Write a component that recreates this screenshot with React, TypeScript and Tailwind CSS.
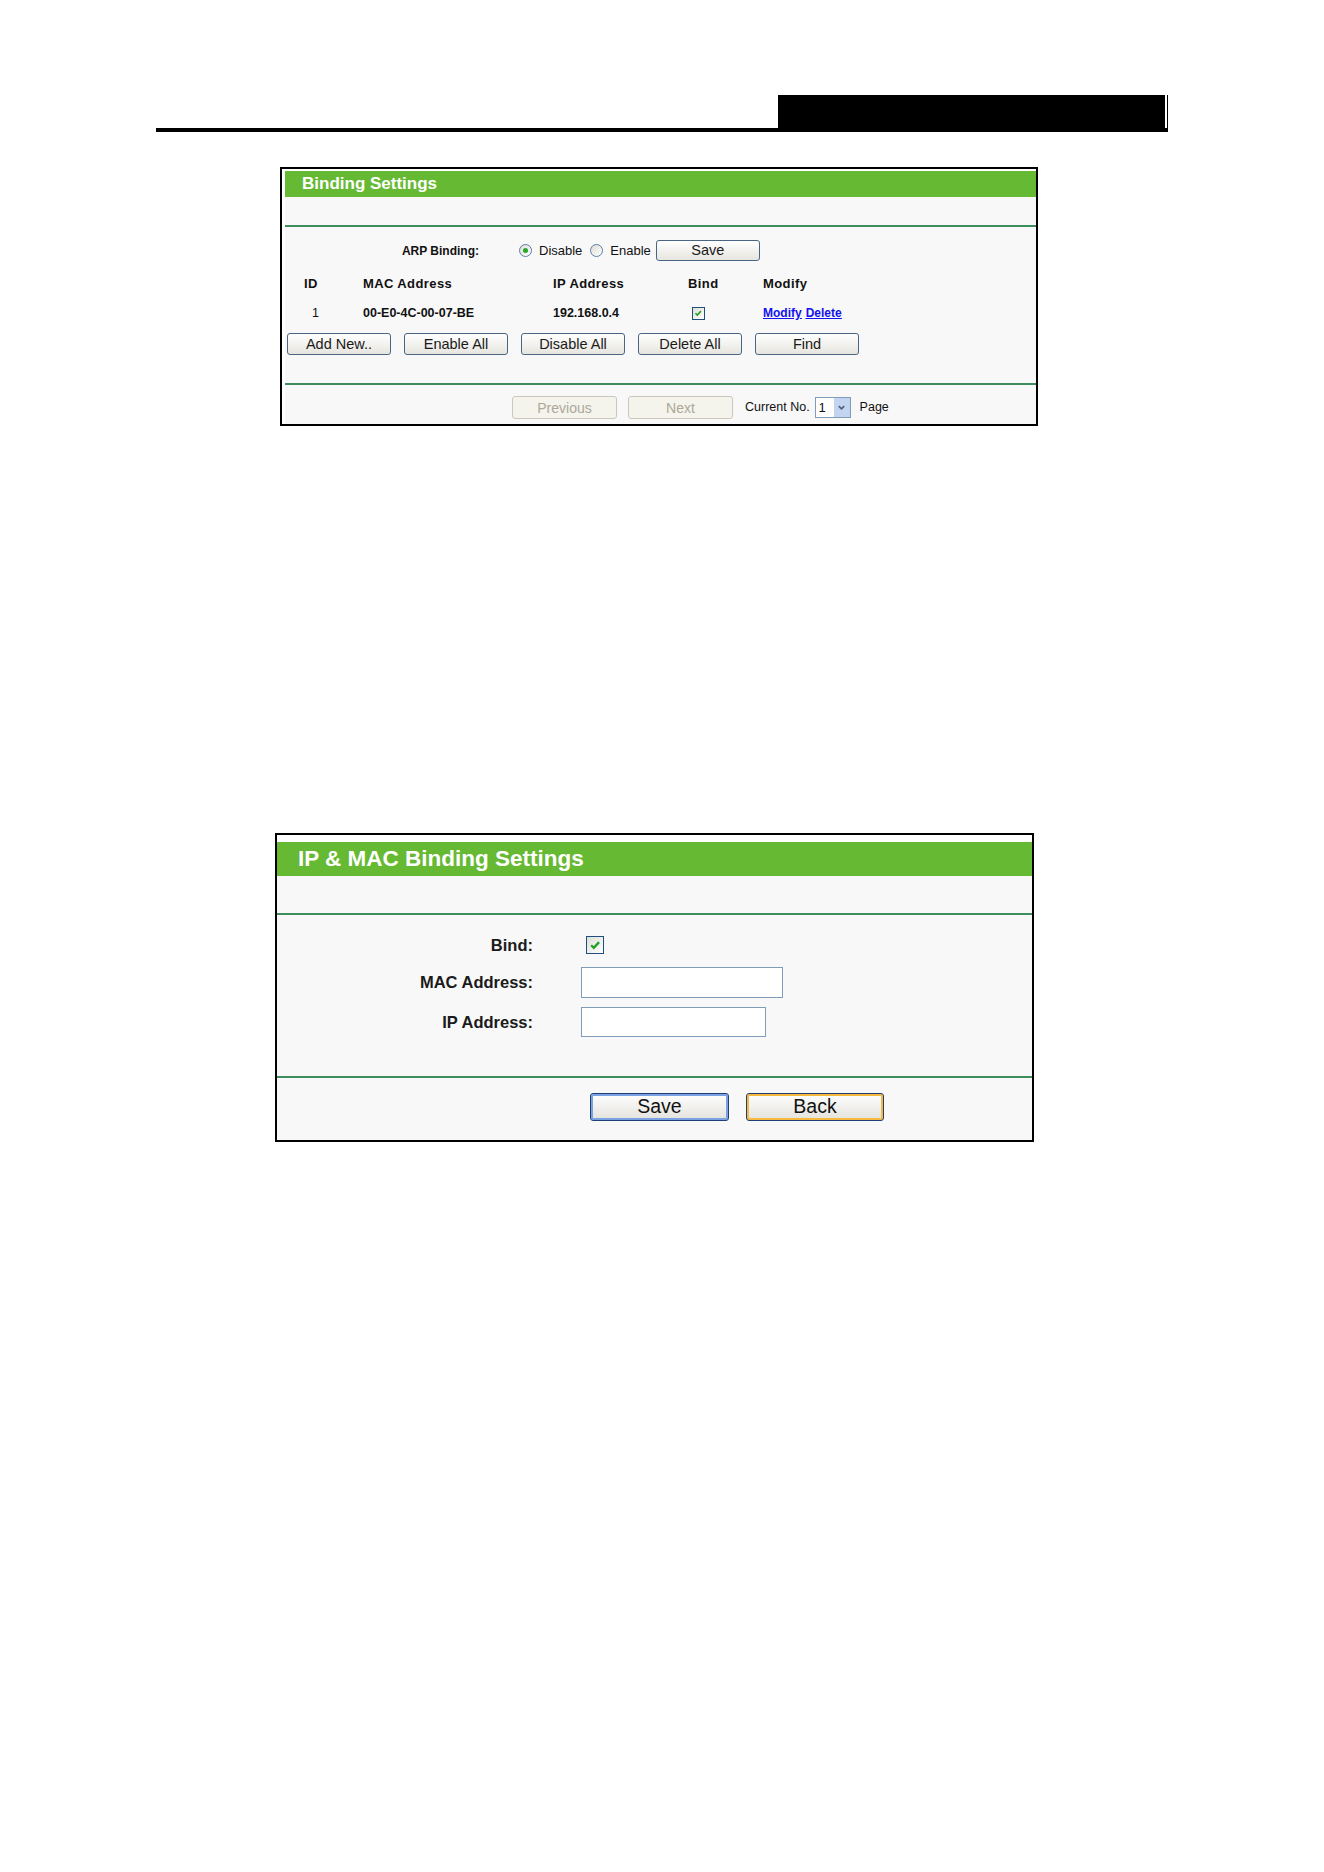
import React from "react";

const legacyBtn =
  "flex items-center justify-center rounded-[3px] border border-[#4b6684] bg-linear-to-b from-white to-[#e6e5de] text-[14.5px] leading-none text-[#1a1a1a]";

const disabledBtn =
  "flex items-center justify-center rounded-[3px] border border-[#cbc8bb] bg-[#f4f3ec] text-[14px] leading-none text-[#aca899]";

function Tick({ className }: { className: string }) {
  return (
    <span
      className={`flex shrink-0 items-center justify-center border border-[#1f4f7d] bg-linear-to-br from-[#dedfd8] to-white ${className}`}
    >
      <svg viewBox="0 0 10 10" className="h-[75%] w-[75%]">
        <path d="M1.8 5.2 L4 7.4 L8.4 2.6" fill="none" stroke="#21a121" strokeWidth="1.9" />
      </svg>
    </span>
  );
}

function Radio({ checked }: { checked?: boolean }) {
  return (
    <span className="flex h-[13px] w-[13px] shrink-0 items-center justify-center rounded-full border border-[#5c7fa4] bg-linear-to-br from-[#dcddd6] to-white">
      {checked && <span className="h-[5px] w-[5px] rounded-full bg-[#26a826]" />}
    </span>
  );
}

function GreenRule() {
  return <div className="h-[2px] bg-[#3d8d5d]" />;
}

function BindingList() {
  return (
    <div className="ml-[280px] mt-[35px] w-[758px] border-2 border-black bg-white">
      <div className="ml-[3px] mt-[2px] bg-[#f8f8f8]">
        <div className="flex h-[26px] items-center bg-[#66b933] pl-[17px] text-[17px] font-bold text-white">
          Binding Settings
        </div>
        <div className="h-[28px]" />
        <GreenRule />

        <div className="flex h-[156px] flex-col text-[#111]">
          {/* ARP switch */}
          <div className="mt-[13px] flex h-[21px] items-center">
            <div className="w-[194px] text-right text-[12px] font-bold">ARP Binding:</div>
            <span className="ml-[40px]">
              <Radio checked />
            </span>
            <span className="ml-[7px] text-[13px]">Disable</span>
            <span className="ml-[8px]">
              <Radio />
            </span>
            <span className="ml-[7px] text-[13px]">Enable</span>
            <button className={`${legacyBtn} ml-[5px] h-[21px] w-[104px]`}>Save</button>
          </div>

          {/* table head */}
          <div className="mt-[13px] flex h-[20px] items-center text-[13px] font-bold tracking-[0.4px]">
            <div className="w-[78px] pl-[19px]">ID</div>
            <div className="w-[190px]">MAC Address</div>
            <div className="w-[135px]">IP Address</div>
            <div className="w-[75px]">Bind</div>
            <div>Modify</div>
          </div>

          {/* entries */}
          <div className="mt-[9px] flex h-[20px] items-center text-[12.5px] font-bold">
            <div className="w-[78px] pl-[27px] font-normal">1</div>
            <div className="w-[190px]">00-E0-4C-00-07-BE</div>
            <div className="w-[135px]">192.168.0.4</div>
            <div className="w-[75px] pl-[4px]">
              <Tick className="h-[13px] w-[13px]" />
            </div>
            <div className="flex gap-[4px] text-[12px] text-[#1212ee] underline">
              <a>Modify</a>
              <a>Delete</a>
            </div>
          </div>

          <div className="ml-[2px] mt-[10px] flex gap-[13px]">
            {["Add New..", "Enable All", "Disable All", "Delete All", "Find"].map((label) => (
              <button key={label} className={`${legacyBtn} h-[22px] w-[104px]`}>
                {label}
              </button>
            ))}
          </div>
        </div>

        <GreenRule />
        <div className="h-[39px] pt-[11px]">
          <div className="flex h-[23px] items-center pl-[227px] text-[12.5px] text-[#111]">
            <button className={`${disabledBtn} h-[23px] w-[105px]`}>Previous</button>
            <button className={`${disabledBtn} ml-[11px] h-[23px] w-[105px]`}>Next</button>
            <span className="ml-[12px]">Current No.</span>
            <div className="ml-[5px] flex h-[21px] w-[36px] border border-[#7f9db9] bg-white">
              <span className="flex-1 pl-[3px] text-[13px] leading-[19px]">1</span>
              <span className="flex w-[16px] items-center justify-center bg-[#c3d4f1]">
                <svg viewBox="0 0 10 10" className="h-[9px] w-[9px]">
                  <path d="M2 3.5 L5 6.5 L8 3.5" fill="none" stroke="#4d6185" strokeWidth="2" />
                </svg>
              </span>
            </div>
            <span className="ml-[9px]">Page</span>
          </div>
        </div>
      </div>
    </div>
  );
}

function BindingEditor() {
  return (
    <div className="ml-[275px] mt-[407px] w-[759px] border-2 border-black bg-white">
      <div className="mt-[7px] bg-[#f8f8f8]">
        <div className="flex h-[34px] items-center bg-[#66b933] pl-[21px] text-[22.5px] font-bold text-white">
          IP &amp; MAC Binding Settings
        </div>
        <div className="h-[37px]" />
        <GreenRule />

        <div className="flex h-[161px] flex-col text-[16.5px] font-bold text-[#1b1b1b]">
          <div className="mt-[21px] flex h-[18px] items-center">
            <div className="w-[256px] text-right">Bind:</div>
            <Tick className="ml-[53px] h-[18px] w-[18px]" />
          </div>
          <div className="mt-[13px] flex h-[31px] items-center">
            <div className="w-[256px] text-right">MAC Address:</div>
            <input className="ml-[48px] h-[31px] w-[202px] border border-[#7f9db9] bg-white" />
          </div>
          <div className="mt-[9px] flex h-[30px] items-center">
            <div className="w-[256px] text-right">IP Address:</div>
            <input className="ml-[48px] h-[30px] w-[185px] border border-[#7f9db9] bg-white" />
          </div>
        </div>

        <GreenRule />
        <div className="flex h-[62px] gap-[17px] pl-[313px] pt-[15px]">
          <button className="flex h-[28px] w-[139px] items-center justify-center rounded-[3px] border border-[#1d3f73] bg-linear-to-b from-white to-[#e3e2dc] text-[19.5px] leading-none text-[#111] shadow-[inset_0_0_0_2px_#7aa2e2]">
            Save
          </button>
          <button className="flex h-[28px] w-[138px] items-center justify-center rounded-[3px] border border-[#1d3f73] bg-linear-to-b from-white to-[#e3e2dc] text-[19.5px] leading-none text-[#111] shadow-[inset_0_0_0_2px_#f6b83d]">
            Back
          </button>
        </div>
      </div>
    </div>
  );
}

export default function App() {
  return (
    <div className="h-[1872px] w-[1324px] overflow-hidden bg-white pt-[95px] font-['Liberation_Sans',Arial,sans-serif]">
      {/* running header */}
      <div className="ml-[156px] w-[1012px]">
        <div className="flex h-[33px] justify-end">
          <div className="w-[387px] bg-black" />
          <div className="ml-[2px] w-[1px] bg-black" />
        </div>
        <div className="h-[4px] bg-black" />
      </div>

      <BindingList />
      <BindingEditor />
    </div>
  );
}
